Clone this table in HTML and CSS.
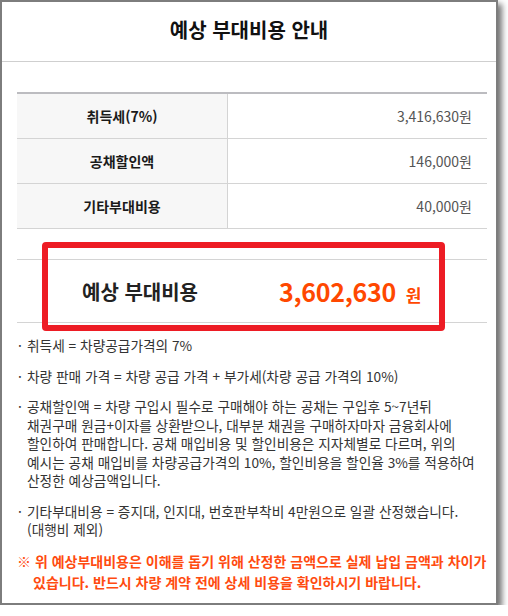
FILE: index.html
```html
<!DOCTYPE html>
<html lang="ko">
<head>
<meta charset="utf-8">
<title>예상 부대비용 안내</title>
<link rel="stylesheet" href="styles.css">
</head>
<body>
<div class="frame">
  <div class="header">예상 부대비용 안내</div>
  <div class="content">
    <div class="cost-table">
      <div class="row">
        <div class="label">취득세(7%)</div>
        <div class="value">3,416,630원</div>
      </div>
      <div class="row">
        <div class="label">공채할인액</div>
        <div class="value">146,000원</div>
      </div>
      <div class="row">
        <div class="label">기타부대비용</div>
        <div class="value">40,000원</div>
      </div>
    </div>
    <div class="total">
      <div class="total-label">예상 부대비용</div>
      <div class="total-value"><span class="total-num">3,602,630</span><span class="total-unit">원</span></div>
      <div class="highlight"></div>
    </div>
    <ul class="notes">
      <li><span class="dot">·</span><span class="txt">취득세 = 차량공급가격의 7%</span></li>
      <li><span class="dot">·</span><span class="txt">차량 판매 가격 = 차량 공급 가격 + 부가세(차량 공급 가격의 10%)</span></li>
      <li><span class="dot">·</span><span class="txt">공채할인액 = 차량 구입시 필수로 구매해야 하는 공채는 구입후 5~7년뒤<br>채권구매 원금+이자를 상환받으나, 대부분 채권을 구매하자마자 금융회사에<br>할인하여 판매합니다. 공채 매입비용 및 할인비용은 지자체별로 다르며, 위의<br>예시는 공채 매입비를 차량공급가격의 10%, 할인비용을 할인율 3%를 적용하여<br>산정한 예상금액입니다.</span></li>
      <li><span class="dot">·</span><span class="txt">기타부대비용 = 증지대, 인지대, 번호판부착비 4만원으로 일괄 산정했습니다.<br>(대행비 제외)</span></li>
    </ul>
    <p class="warning">※ 위 예상부대비용은 이해를 돕기 위해 산정한 금액으로 실제 납입 금액과 차이가<br>있습니다. 반드시 차량 계약 전에 상세 비용을 확인하시기 바랍니다.</p>
  </div>
</div>
</body>
</html>
```

FILE: styles.css
```css
html, body {
  margin: 0;
  padding: 0;
  background: #ffffff;
}

body {
  font-family: "Noto Sans CJK KR", "Noto Sans", sans-serif;
  color: #333;
  overflow: hidden;
}

.frame {
  width: 494px;
  height: 601px;
  border: 2px solid #7d7d7d;
  background: #fff;
  box-shadow: 4px 4px 6px rgba(0, 0, 0, 0.55);
  box-sizing: content-box;
}

.header {
  height: 59px;
  line-height: 56px;
  border-bottom: 1px solid #cfcfcf;
  text-align: center;
  font-size: 20px;
  font-weight: 700;
  color: #111;
}

.content {
  padding: 30px 9px 0 15px;
}

.cost-table {
  border-top: 2px solid #bcbcc0;
}

.row {
  display: grid;
  grid-template-columns: 211px 1fr;
  height: 44px;
  border-bottom: 1px solid #d4d4d4;
}

.label {
  background: #f7f7f7;
  border-right: 1px solid #d4d4d4;
  display: flex;
  align-items: center;
  justify-content: center;
  font-size: 14px;
  font-weight: 700;
  color: #1a1a1a;
}

.value {
  display: flex;
  align-items: center;
  justify-content: flex-end;
  padding-right: 15px;
  font-size: 14px;
  color: #555;
}

.total {
  position: relative;
  margin-top: 30px;
  height: 62px;
  border-top: 1px solid #d4d4d4;
  border-bottom: 1px solid #d4d4d4;
  display: flex;
  align-items: center;
  padding-left: 65px;
}

.total-label {
  font-size: 20px;
  font-weight: 700;
  color: #222;
  width: 197px;
}

.total-value {
  display: flex;
  align-items: baseline;
  color: #ff4800;
  font-weight: 700;
}

.total-num {
  font-size: 25px;
  letter-spacing: -0.3px;
}

.total-unit {
  font-size: 17px;
  margin-left: 10px;
}

.highlight {
  position: absolute;
  left: 25px;
  top: -18px;
  width: 391px;
  height: 77px;
  border: 6px solid #ed1c24;
  border-radius: 4px;
  pointer-events: none;
}

.notes {
  list-style: none;
  margin: 13px 0 0 0;
  padding: 0;
  font-size: 13.7px;
  line-height: 18.5px;
  color: #333;
}

.notes li {
  display: flex;
  margin-bottom: 12px;
}

.dot {
  width: 10px;
  flex: none;
  padding-left: 1px;
  box-sizing: border-box;
}

.txt {
  flex: 1;
  white-space: nowrap;
}

.warning {
  margin: 0;
  padding-left: 16px;
  text-indent: -16px;
  font-size: 14px;
  line-height: 21px;
  font-weight: 700;
  color: #ff4b10;
  white-space: nowrap;
}
```
